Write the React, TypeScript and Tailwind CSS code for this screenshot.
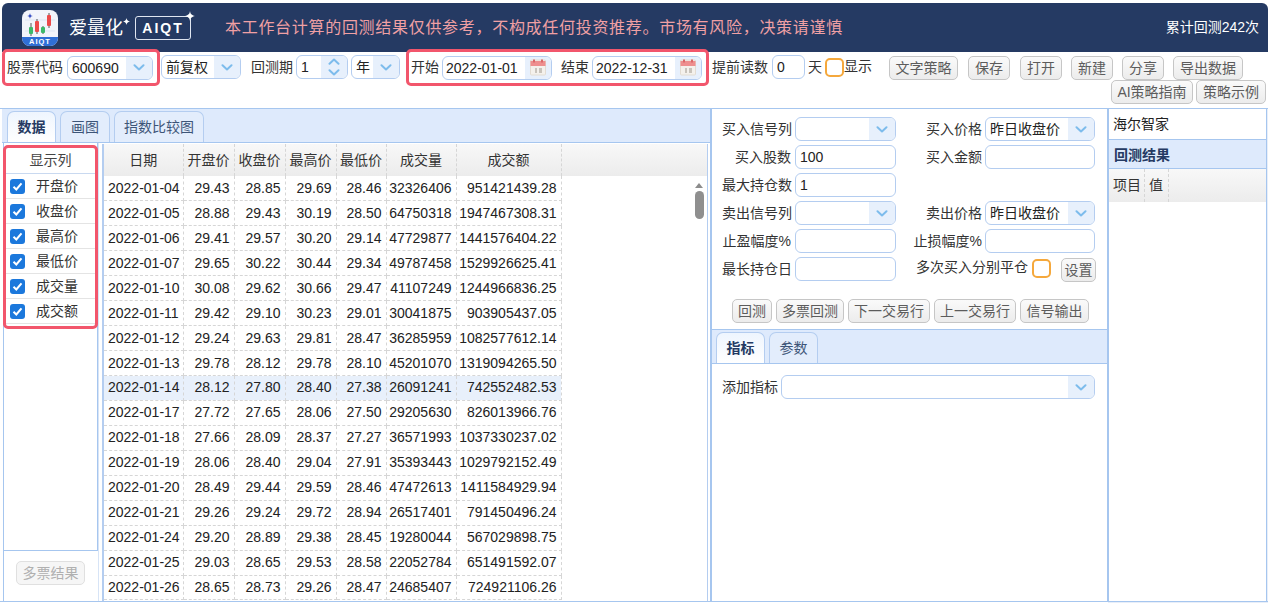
import React from "react";

const FONT = '"Liberation Sans","Noto Sans CJK SC",sans-serif';

const rows = [
  ["2022-01-04","29.43","28.85","29.69","28.46","32326406","951421439.28"],
  ["2022-01-05","28.88","29.43","30.19","28.50","64750318","1947467308.31"],
  ["2022-01-06","29.41","29.57","30.20","29.14","47729877","1441576404.22"],
  ["2022-01-07","29.65","30.22","30.44","29.34","49787458","1529926625.41"],
  ["2022-01-10","30.08","29.62","30.66","29.47","41107249","1244966836.25"],
  ["2022-01-11","29.42","29.10","30.23","29.01","30041875","903905437.05"],
  ["2022-01-12","29.24","29.63","29.81","28.47","36285959","1082577612.14"],
  ["2022-01-13","29.78","28.12","29.78","28.10","45201070","1319094265.50"],
  ["2022-01-14","28.12","27.80","28.40","27.38","26091241","742552482.53"],
  ["2022-01-17","27.72","27.65","28.06","27.50","29205630","826013966.76"],
  ["2022-01-18","27.66","28.09","28.37","27.27","36571993","1037330237.02"],
  ["2022-01-19","28.06","28.40","29.04","27.91","35393443","1029792152.49"],
  ["2022-01-20","28.49","29.44","29.59","28.46","47472613","1411584929.94"],
  ["2022-01-21","29.26","29.24","29.72","28.94","26517401","791450496.24"],
  ["2022-01-24","29.20","28.89","29.38","28.45","19280044","567029898.75"],
  ["2022-01-25","29.03","28.65","29.53","28.58","22052784","651491592.07"],
  ["2022-01-26","28.65","28.73","29.26","28.47","24685407","724921106.26"],
];
const heads = ["日期","开盘价","收盘价","最高价","最低价","成交量","成交额"];
const widths = ["w-[79px]","w-[51px]","w-[51px]","w-[51px]","w-[50px]","w-[70px]","w-[105px]"];

function Chevron({ up = false }: { up?: boolean }) {
  return (
    <svg width="12" height="7" viewBox="0 0 12 7" className={up ? "rotate-180" : ""}>
      <path d="M1.5 1.2 6 5.4l4.5-4.2" fill="none" stroke="#7dbcec" strokeWidth="2" strokeLinecap="round" strokeLinejoin="round" />
    </svg>
  );
}

function Select({ w, value = "" }: { w: string; value?: string }) {
  return (
    <div className={`${w} h-[24px] flex shrink-0 rounded-[6px] border border-[#b4cdf0] bg-white overflow-hidden`}>
      <div className="flex-1 pl-[4px] leading-[22px] text-[#222] whitespace-nowrap overflow-hidden">{value}</div>
      <div className="w-[26px] bg-[#e7f0fc] flex items-center justify-center"><Chevron /></div>
    </div>
  );
}

function Input({ w, value = "" }: { w: string; value?: string }) {
  return <div className={`${w} h-[24px] shrink-0 rounded-[6px] border border-[#b4cdf0] bg-white pl-[4px] leading-[22px] text-[#222]`}>{value}</div>;
}

function Calendar() {
  return (
    <svg width="16" height="17" viewBox="0 0 16 17">
      <rect x="0.5" y="1" width="15" height="15" rx="1" fill="#f4f1ec" stroke="#e3dcd2" />
      <rect x="0.5" y="2" width="15" height="5" fill="#ee8f8f" />
      <rect x="3" y="0.5" width="2" height="3" fill="#d96a6a" />
      <rect x="11" y="0.5" width="2" height="3" fill="#d96a6a" />
      <rect x="5" y="9" width="2" height="5" fill="#c9c4bc" />
      <rect x="9" y="9" width="3" height="5" fill="#c9c4bc" />
    </svg>
  );
}

function DateBox({ value }: { value: string }) {
  return (
    <div className="w-[110px] h-[24px] flex shrink-0 rounded-[6px] border border-[#b4cdf0] bg-white overflow-hidden">
      <div className="flex-1 pl-[3px] leading-[22px] text-[#222]">{value}</div>
      <div className="w-[26px] bg-[#e7f0fc] flex items-center justify-center"><Calendar /></div>
    </div>
  );
}

function Btn({ w, children, lh = "leading-[22px]" }: { w: string; children: React.ReactNode; lh?: string }) {
  return (
    <div className={`${w} ${lh} h-[24px] shrink-0 rounded-[5px] border border-[#c6c6c6] bg-gradient-to-b from-[#fafafa] to-[#ececec] text-[#5c5c5c] text-center whitespace-nowrap`}>
      {children}
    </div>
  );
}

function Orange({ cls = "" }: { cls?: string }) {
  return <div className={`w-[19px] h-[19px] shrink-0 rounded-[5px] border-2 border-[#f5a83c] bg-white ${cls}`} />;
}

function Tab({ w, active = false, children }: { w: string; active?: boolean; children: React.ReactNode }) {
  return (
    <div className={`${w} h-[31px] shrink-0 rounded-t-[7px] border border-b-0 border-[#b4cdf0] text-center leading-[30px] ${active ? "bg-gradient-to-b from-[#eef5fe] to-white font-bold text-[#253a63]" : "bg-[#e3edfc] text-[#3d5578]"}`}>
      {children}
    </div>
  );
}

function Star({ size = 12 }: { size?: number }) {
  return (
    <svg width={size} height={size} viewBox="0 0 12 12">
      <path d="M6 0c.5 3.6 1.9 5 6 6-4.100 1-5.500 2.400-6 6-.5-3.600-1.900-5-6-6 4.100-1 5.500-2.400 6-6Z" fill="#fff" />
    </svg>
  );
}

function Logo() {
  return (
    <svg width="36" height="36" viewBox="0 0 36 36" className="shrink-0">
      <rect width="36" height="36" rx="8" fill="#f2f4fb" />
      <path d="M0 27h36v1a8 8 0 0 1-8 8H8a8 8 0 0 1-8-8Z" fill="#2f6fd6" />
      <text x="18" y="34" textAnchor="middle" fontSize="7.500" fontWeight="700" fill="#fff" letterSpacing="1" fontFamily="Liberation Sans">AIQT</text>
      <path d="M3 10h30M3 21h30" stroke="#d5def0" strokeWidth="0.700" />
      <path d="M9 13v13M15 9v15M21 16v8M27 3v15" strokeWidth="1" stroke="#555" />
      <rect x="7" y="17" width="4" height="7" rx="1" fill="#3cb96a" />
      <rect x="13" y="11" width="4" height="11" rx="1" fill="#ec4a4a" />
      <rect x="19" y="17" width="4" height="6" rx="1" fill="#3cb96a" />
      <rect x="25" y="5" width="4" height="11" rx="1" fill="#ec4a4a" />
      <path d="M8 3c.3 2 .900 2.600 3 3-2.100.4-2.700 1-3 3-.3-2-.9-2.600-3-3 2.100-.4 2.700-1 3-3Z" fill="#3e54c6" />
    </svg>
  );
}

function Lbl({ w, children, cls = "" }: { w: string; children: React.ReactNode; cls?: string }) {
  return <div className={`${w} shrink-0 text-right leading-[24px] text-[#333] whitespace-nowrap ${cls}`}>{children}</div>;
}

const listItems = ["开盘价","收盘价","最高价","最低价","成交量","成交额"];
const TL = "leading-[23px]";

export default function App() {
  return (
    <div className="w-[1268px] h-[603px] overflow-hidden bg-white text-[14px] text-[#333]" style={{ fontFamily: FONT }}>
      {/* header */}
      <div className="mt-[3px] ml-[2px] h-[49px] rounded-t-[6px] bg-[#253a63] flex items-center pl-[20px] pr-[9px]">
        <Logo />
        <div className="ml-[11px] text-[18px] text-white leading-none">爱量化</div>
        <div className="mb-[12px]"><Star size={7} /></div>
        <div className="ml-[5px] w-[56px] h-[24px] rounded-[3px] border border-[#dfe5f0] text-white font-bold text-[14px] tracking-[2px] text-center leading-[22px] relative">
          AIQT
          <div className="absolute -right-[5px] -top-[6px]"><Star size={10} /></div>
        </div>
        <div className="ml-[34px] text-[16px] tracking-[0.7px] text-[#f0a0a4] whitespace-nowrap">本工作台计算的回测结果仅供参考，不构成任何投资推荐。市场有风险，决策请谨慎</div>
        <div className="ml-auto text-white whitespace-nowrap">累计回测242次</div>
      </div>

      {/* toolbar */}
      <div className="h-[56px] pl-[2px] flex items-start relative">
        <div className="-mt-[3px] h-[37px] w-[158px] rounded-[5px] border-[3px] border-[#f2566c] flex items-center pl-[2px] gap-[4px] bg-white">
          <span className="whitespace-nowrap">股票代码</span>
          <Select w="w-[86px]" value="600690" />
        </div>
        <div className="mt-[3px] ml-[1px] flex items-center">
          <Select w="w-[80px]" value="前复权" />
          <span className="ml-[10px] whitespace-nowrap">回测期</span>
          <div className="ml-[3px] w-[52px] h-[24px] flex rounded-[6px] border border-[#b4cdf0] overflow-hidden">
            <div className="flex-1 pl-[4px] leading-[22px] text-[#222]">1</div>
            <div className="w-[26px] bg-[#e7f0fc] flex flex-col items-center justify-center gap-[4px]"><Chevron up /><Chevron /></div>
          </div>
          <div className="ml-[3px]"><Select w="w-[49px]" value="年" /></div>
        </div>
        <div className="-mt-[3px] ml-[6px] h-[37px] w-[303px] rounded-[5px] border-[3px] border-[#f2566c] flex items-center pl-[2px] bg-white">
          <span className="whitespace-nowrap">开始</span>
          <div className="ml-[3px]"><DateBox value="2022-01-01" /></div>
          <span className="ml-[9px] whitespace-nowrap">结束</span>
          <div className="ml-[3px]"><DateBox value="2022-12-31" /></div>
        </div>
        <div className="mt-[3px] ml-[3px] flex items-center">
          <span className="whitespace-nowrap">提前读数</span>
          <div className="ml-[4px]"><Input w="w-[33px]" value="0" /></div>
          <span className="ml-[3px]">天</span>
          <Orange cls="ml-[3px]" />
          <span className="-mt-[1px] whitespace-nowrap">显示</span>
        </div>
        <div className="ml-auto mt-[4px] w-[380px] flex flex-wrap justify-end">
          <div className="flex gap-[9px] mr-[25px]">
            <Btn w="w-[69px] mr-[1px]" lh={TL}>文字策略</Btn>
            <Btn w="w-[42px] mr-[1px]" lh={TL}>保存</Btn>
            <Btn w="w-[42px]" lh={TL}>打开</Btn>
            <Btn w="w-[42px]" lh={TL}>新建</Btn>
            <Btn w="w-[42px]" lh={TL}>分享</Btn>
            <Btn w="w-[70px]" lh={TL}>导出数据</Btn>
          </div>
          <div className="flex gap-[3px] mr-[2px]">
            <Btn w="w-[82px]" lh={TL}>AI策略指南</Btn>
            <Btn w="w-[70px]" lh={TL}>策略示例</Btn>
          </div>
        </div>
      </div>

      {/* main */}
      <div className="h-[494px] flex border-t border-b border-[#a6c6ef]">
        {/* left panel */}
        <div className="w-[708px] ml-[2px] shrink-0 flex flex-col">
          <div className="h-[34px] shrink-0 bg-[#deeafc] border-b border-[#a6c6ef] flex items-end pl-[5px] gap-[4px]">
            <Tab w="w-[49px]" active>数据</Tab>
            <Tab w="w-[50px]">画图</Tab>
            <Tab w="w-[90px]">指数比较图</Tab>
          </div>
          <div className="flex-1 min-h-0 flex">
            {/* column list */}
            <div className="w-[96px] ml-[1px] shrink-0 flex flex-col border-r border-[#d7e4f6]">
              <div className="flex-1 flex flex-col border-r border-l border-b border-[#a6c6ef]">
                <div className="mt-[2px] -mx-[1px] h-[184px] rounded-[5px] border-[3px] border-[#f2566c] bg-white">
                  <div className="h-[26px] border-b border-[#c9d9f0] text-center leading-[24px] text-[#444]">显示列</div>
                  {listItems.map((t) => (
                    <div key={t} className="h-[25px] border-b border-[#e4e4e4] flex items-center pl-[4px]">
                      <div className="w-[15px] h-[15px] rounded-[3px] bg-[#1b78dc] flex items-center justify-center">
                        <svg width="11" height="11" viewBox="0 0 11 11"><path d="M1.500 5.800 4.300 8.500 9.500 2.300" fill="none" stroke="#fff" strokeWidth="2" /></svg>
                      </div>
                      <span className="ml-[11px] text-[#333]">{t}</span>
                    </div>
                  ))}
                </div>
              </div>
              <div className="h-[50px] shrink-0 border-l border-[#a6c6ef] pl-[12px] pt-[10px]">
                <div className="w-[69px] h-[24px] rounded-[5px] border border-[#e0e0e0] bg-[#f6f6f6] text-[#b0b0b0] text-center leading-[22px]">多票结果</div>
              </div>
            </div>
            {/* table */}
            <div className="ml-[3px] w-[606px] shrink-0 relative border-l-2 border-[#b4cdf0] overflow-hidden mt-[1px] border-r">
              <table className="border-collapse table-fixed w-full">
                <thead>
                  <tr className="h-[32px] bg-gradient-to-b from-[#f8f8f8] to-[#ececec]">
                    {heads.map((h, i) => (
                      <th key={h} className={`${widths[i]} font-normal text-[#333] text-center border-r border-dashed border-[#d6d6d6] p-0`}>{h}</th>
                    ))}
                    <th className="p-0" />
                  </tr>
                </thead>
                <tbody>
                  {rows.map((r, ri) => (
                    <tr key={r[0]} className="h-[24.94px]">
                      {r.map((c, i) => (
                        <td key={i} className={`p-0 pr-[4px] text-right text-[#222] whitespace-nowrap border-r border-b border-dashed border-[#d6d6d6] ${i === 0 ? "pl-[4px]" : ""} ${ri === 8 ? "bg-[#e8f0fb]" : ""}`}>{c}</td>
                      ))}
                      <td className="p-0" />
                    </tr>
                  ))}
                </tbody>
              </table>
              <div className="absolute right-[3px] top-[33px] w-[10px] flex flex-col items-center">
                <div className="mt-[6px] w-0 h-0 border-l-[4px] border-r-[4px] border-b-[5px] border-l-transparent border-r-transparent border-b-[#8c8c8c]" />
                <div className="mt-[3px] w-[9px] h-[28px] rounded-[5px] bg-[#8f8f8f]" />
              </div>
            </div>
          </div>
        </div>

        {/* form panel */}
        <div className="w-[398px] shrink-0 border-l-2 border-r border-[#a6c6ef] flex flex-col">
          <div className="h-[221px] shrink-0 pt-[8px] pl-[10px] border-b border-[#a6c6ef]">
            <div className="flex flex-col gap-[4px]">
              <div className="flex">
                <Lbl w="w-[69px]">买入信号列</Lbl>
                <div className="ml-[4px]"><Select w="w-[101px]" /></div>
                <Lbl w="w-[86px]">买入价格</Lbl>
                <div className="ml-[3px]"><Select w="w-[110px]" value="昨日收盘价" /></div>
              </div>
              <div className="flex">
                <Lbl w="w-[69px]">买入股数</Lbl>
                <div className="ml-[4px]"><Input w="w-[101px]" value="100" /></div>
                <Lbl w="w-[86px]">买入金额</Lbl>
                <div className="ml-[3px]"><Input w="w-[110px]" /></div>
              </div>
              <div className="flex">
                <Lbl w="w-[69px]">最大持仓数</Lbl>
                <div className="ml-[4px]"><Input w="w-[101px]" value="1" /></div>
              </div>
              <div className="flex">
                <Lbl w="w-[69px]">卖出信号列</Lbl>
                <div className="ml-[4px]"><Select w="w-[101px]" /></div>
                <Lbl w="w-[86px]">卖出价格</Lbl>
                <div className="ml-[3px]"><Select w="w-[110px]" value="昨日收盘价" /></div>
              </div>
              <div className="flex">
                <Lbl w="w-[69px]">止盈幅度%</Lbl>
                <div className="ml-[4px]"><Input w="w-[101px]" /></div>
                <Lbl w="w-[86px]">止损幅度%</Lbl>
                <div className="ml-[3px]"><Input w="w-[110px]" /></div>
              </div>
              <div className="flex">
                <Lbl w="w-[69px]">最长持仓日</Lbl>
                <div className="ml-[4px]"><Input w="w-[101px]" /></div>
                <Lbl w="w-[132px]" cls="-mt-[2px]">多次买入分别平仓</Lbl>
                <Orange cls="ml-[4px] mt-[2px]" />
                <Btn w="w-[35px] ml-[10px] mt-[1px]">设置</Btn>
              </div>
            </div>
            <div className="mt-[17px] ml-[10px] flex gap-[4px]">
              <Btn w="w-[40px]">回测</Btn>
              <Btn w="w-[68px]">多票回测</Btn>
              <Btn w="w-[82px]">下一交易行</Btn>
              <Btn w="w-[82px]">上一交易行</Btn>
              <Btn w="w-[69px]">信号输出</Btn>
            </div>
          </div>
          <div className="h-[34px] shrink-0 bg-[#deeafc] border-b border-[#a6c6ef] flex items-end pl-[4px] gap-[4px]">
            <Tab w="w-[49px]" active>指标</Tab>
            <Tab w="w-[49px]">参数</Tab>
          </div>
          <div className="pt-[11px] pl-[10px] flex">
            <Lbl w="w-[56px]">添加指标</Lbl>
            <div className="ml-[3px]"><Select w="w-[314px]" /></div>
          </div>
        </div>

        {/* right panel */}
        <div className="w-[159px] shrink-0 flex flex-col border-r border-[#a6c6ef]">
          <div className="h-[31px] shrink-0 border-l border-b border-[#a6c6ef] pl-[4px] leading-[31px] text-[#222]">海尔智家</div>
          <div className="h-[29px] shrink-0 bg-[#deeafc] border-l border-b border-[#a6c6ef] pl-[5px] leading-[30px] font-bold text-[#253a63]">回测结果</div>
          <div className="h-[33px] shrink-0 border-l border-[#a6c6ef] flex bg-gradient-to-b from-[#f8f8f8] to-[#ececec]">
            <div className="w-[36px] pl-[4px] border-r border-dashed border-[#d6d6d6] leading-[33px]">项目</div>
            <div className="w-[24px] pl-[4px] border-r border-dashed border-[#d6d6d6] leading-[33px]">值</div>
          </div>
          <div className="flex-1 border-l border-[#a6c6ef]" />
        </div>
        <div className="flex-1 bg-[#e8eef8]" />
      </div>
      <div className="ml-auto w-[160px] h-[2px] bg-[#e8eef8]" />
    </div>
  );
}
